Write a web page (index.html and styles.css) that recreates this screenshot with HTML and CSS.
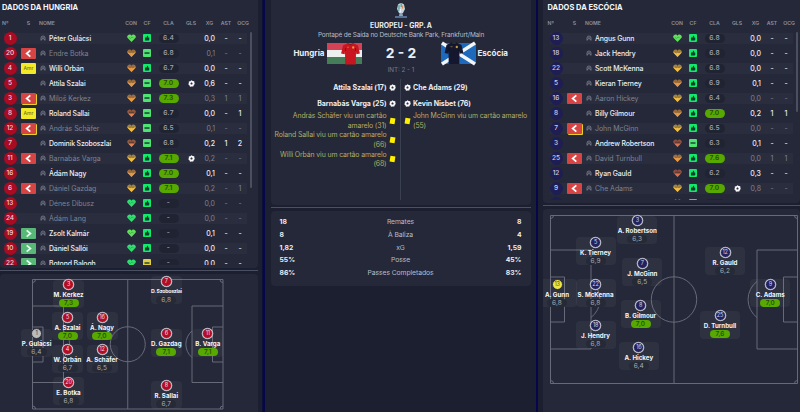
FILE: index.html
```html
<!DOCTYPE html>
<html lang="pt">
<head>
<meta charset="utf-8">
<title>Hungria - Escócia</title>
<link rel="stylesheet" href="styles.css">
</head>
<body>
<svg class="defs" width="0" height="0">
  <defs>
    <path id="heartShape" d="M9 16 1.8 8.7A4.2 4.2 0 0 1 2 2.6a4.400 4.400 0 0 1 7 .7 4.400 4.400 0 0 1 7-.7 4.200 4.200 0 0 1 .2 6.100z"/>
    <clipPath id="clipHalf"><rect y="7" width="18" height="12"/></clipPath>
    <clipPath id="clipLow"><rect y="9.5" width="18" height="9"/></clipPath>
    <symbol id="heart-full" viewBox="0 0 18 17"><use href="#heartShape" fill="currentColor"/><path d="M4 6.5l3 2.5 3-3 3 1.5" stroke="#2a9a50" stroke-width="1.3" fill="none"/></symbol>
    <symbol id="heart-half" viewBox="0 0 18 17"><use href="#heartShape" fill="currentColor" opacity=".6"/><use href="#heartShape" fill="currentColor" clip-path="url(#clipHalf)"/><path d="M4 6l2.500 1.500L9 6l2.500 1.500L14 6" stroke="#6d5330" stroke-width="1.200" fill="none"/></symbol>
    <symbol id="heart-low" viewBox="0 0 18 17"><use href="#heartShape" fill="currentColor" opacity=".55"/><use href="#heartShape" fill="currentColor" clip-path="url(#clipLow)"/><path d="M4 6.500h10" stroke="#53352f" stroke-width="2" fill="none"/></symbol>
    <symbol id="thumb" viewBox="0 0 16 16"><rect width="16" height="16" rx="2" fill="#12ea6c"/><path d="M4 7h3l1.500-3.500 1.800.5L10 7h2.500v4.500L11.500 13H4z" fill="#0d3f2c"/></symbol>
    <symbol id="minus" viewBox="0 0 16 16"><rect width="16" height="16" rx="2" fill="currentColor"/><path d="M3 6.500h10v3.200H3z" fill="#1d4a36"/></symbol>
    <symbol id="person" viewBox="0 0 12 12"><path d="M2 11V6a4 4 0 0 1 8 0v5M4.500 4.500v2a1.500 1.500 0 0 0 3 0v-2M2 10l2.500-1.500M10 10 7.500 8.500" fill="none" stroke="#8a8e9d" stroke-width="1.400"/></symbol>
    <symbol id="ball" viewBox="0 0 14 14"><path d="M7 .5 9.500 2l3 .5.3 3L13.500 8l-1.800 2.200L10.500 13 7 12.800 4 13.500 2.800 10.600.5 8.500 1.800 6 1.500 3l3-.7z" fill="#f8f9fb"/><path d="M7 4.600 9.300 6.300 8.400 9H5.600L4.700 6.300z" fill="#2a2e3d"/></symbol>
    <symbol id="out" viewBox="0 0 16 12"><path d="M10 2.500 6 6 10 9.500" fill="none" stroke="#fff" stroke-width="1.900"/></symbol>
    <symbol id="in" viewBox="0 0 16 12"><path d="M6 2.500 10.200 6 6 9.500" fill="none" stroke="#e8fff0" stroke-width="1.800"/></symbol>
    <symbol id="shirt" viewBox="0 0 20 23"><path d="M7 1.200 2.500 3.500.6 11.500l3.600.8.300-2.500L4.700 22.500h10.600l.2-12.700.3 2.500 3.600-.8-1.900-8L13 1.200Q10 3 7 1.200z" fill="currentColor"/><path d="M7 1.200Q10 4 13 1.200M5 9V6M15 9V6" fill="none" stroke="#000" stroke-opacity=".3"/><path d="M6.500 5.200h2M12 4.700h1.500v1.500H12z" stroke="#e0b840" stroke-width=".5" fill="#d8b040"/></symbol>
  </defs>
</svg>
<main class="layout">
  <section class="side home" id="home"></section>
  <section class="center">
    <div class="card match">
      <svg class="trophy" viewBox="0 0 12 16"><path d="M3 1.500Q6-.8 9 1.500L10 6 8 10H4L2 6z" fill="#c6d5dc"/><path d="M4 2v6M6.200 1v3" stroke="#4e9c98" stroke-width="1.200"/><path d="M7.500 2.500v3" stroke="#d4894f" stroke-width="1.200"/><path d="M5.300 6v3.500" stroke="#eef" stroke-width="1.300"/><path d="M4.500 10h3l.5 3H4z" fill="#8fa4b8"/><path d="M0 13.200h12v1.600H0z" fill="#5d86ac"/></svg>
      <h1>EUROPEU - GRP. A</h1>
      <p class="venue">Pontapé de Saída no Deutsche Bank Park, Frankfurt/Main</p>
      <div class="scoreline">
        <span class="team left">Hungria</span>
        <svg class="flag" viewBox="0 0 35 21"><rect width="35" height="7" fill="#d34355"/><rect y="7" width="35" height="7" fill="#edf0ee"/><rect y="14" width="35" height="7" fill="#457d59"/><use href="#shirt" x="13.500" y="-1" width="20" height="23" color="#c9151f"/></svg>
        <strong class="score">2 - 2</strong>
        <svg class="flag" viewBox="0 0 35 21"><rect width="35" height="21" fill="#1d69bb"/><path d="M1 0 34 21M34 0 1 21" stroke="#f2f6fa" stroke-width="3.300"/><use href="#shirt" x="3" y="-1.500" width="20" height="23" color="#14172e"/></svg>
        <span class="team">Escócia</span>
      </div>
      <p class="half">INT: 2 - 1</p>
      <div class="events">
        <ul class="ev home-ev">
          <li class="goal"><span>Attila Szalai (17)</span><svg><use href="#ball"/></svg></li>
          <li class="goal"><span>Barnabás Varga (25)</span><svg><use href="#ball"/></svg></li>
          <li class="booking"><span>András Schäfer viu um cartão<br>amarelo (31)</span><i></i></li>
          <li class="booking"><span>Roland Sallai viu um cartão amarelo<br>(66)</span><i></i></li>
          <li class="booking"><span>Willi Orbán viu um cartão amarelo<br>(68)</span><i></i></li>
        </ul>
        <ul class="ev away-ev">
          <li class="goal"><svg><use href="#ball"/></svg><span>Che Adams (29)</span></li>
          <li class="goal"><svg><use href="#ball"/></svg><span>Kevin Nisbet (76)</span></li>
          <li class="booking"><i></i><span>John McGinn viu um cartão amarelo<br>(55)</span></li>
        </ul>
      </div>
    </div>
    <div class="rule"></div>
    <div class="card stats">
      <div><b>18</b><span>Remates</span><b>8</b></div>
      <div><b>8</b><span>À Baliza</span><b>4</b></div>
      <div><b>1,82</b><span>xG</span><b>1,59</b></div>
      <div><b>55%</b><span>Posse</span><b>45%</b></div>
      <div><b>86%</b><span>Passes Completados</span><b>83%</b></div>
    </div>
  </section>
  <section class="side away" id="away"></section>
</main>
<script src="app.js"></script>
</body>
</html>
```
FILE: styles.css
```css
* { box-sizing: border-box; }
body { margin: 0; width: 800px; height: 412px; overflow: hidden; background: #1b1f30; color: #eceef3; font-family: Inter, "Liberation Sans", sans-serif; font-size: 7px; }
.defs { position: absolute; }
h1, h2, p, ul { margin: 0; padding: 0; list-style: none; font-weight: inherit; }
svg { display: block; }
.layout { display: grid; grid-template-columns: 265px 271px 264px; height: 412px; }
.card { background: #242838; }
.rule { height: 1px; background: #4a4f61; }

.side { display: flex; flex-direction: column; min-width: 0; }
.home { border-right: 2px solid #05064c; box-shadow: inset -1px 0 #0c0f3a; padding-right: 5px; }
.away { border-left: 2px solid #05064c; padding-left: 5px; }
.roster { position: relative; border-radius: 0 0 4px 4px; overflow: hidden; flex: none; margin-bottom: 2px; }
.home .roster { height: 268px; }
.away .roster { height: 203px; padding-left: 3px; }
.side .rule { margin-bottom: 3px; }
.roster h2 { height: 15px; line-height: 15px; padding-left: 2px; font-size: 7.5px; font-weight: 700; color: #f6f7fa; white-space: nowrap; }
.head, .row { display: grid; align-items: center; justify-items: center; white-space: nowrap; }
.head { grid-template-columns: 20px 17px 2px 84px 16px 16px 27px 18px 19px 14px 20px; height: 15.5px; font-size: 5.2px; font-weight: 600; color: #8d91a0; }
.head :first-child { justify-self: start; padding-left: 2px; }
.head .nome { justify-self: start; }
.away .head :first-child, .away h2 { padding-left: 1.5px; }
.rows { overflow: hidden; }
.home .rows { height: 234px; }
.away .rows { height: 169.5px; }
.row { grid-template-columns: 20px 17px 12px 74px 16px 16px 27px 18px 15px 22px 6px; height: 15px; width: 247px; color: #eceef3; font-weight: 500; }
.row:nth-child(odd) { background: linear-gradient(#292d3e, #292d3e) 4px 2px / 243px 11px no-repeat; }
.row.off { color: #7f8392; font-weight: 400; }
.num { width: 13px; height: 13px; border-radius: 50%; background: #a80b22; color: #f0d4d9; font-size: 6.500px; font-weight: 500; line-height: 13px; text-align: center; }
.away .num { background: #1f1e54; color: #cfd0e4; }
.sub { width: 15px; height: 11px; border-radius: 1px; }
.sub svg { width: 15px; height: 11px; }
.sub.out, .sub.outy { background: #d64444; }
.sub.outy { box-shadow: 1px 1px #e5cf2a; }
.sub.in { background: #57b877; }
.sub.amr { background: #f2ea27; color: #77741f; font-size: 5px; line-height: 11px; text-align: center; }
.person { width: 6px; height: 6px; }
.name { justify-self: start; font-size: 6.9px; letter-spacing: -.12px; }
.off .name { font-size: 7px; letter-spacing: -.05px; }
.heart { width: 9px; height: 8.5px; }
.cf { width: 8px; height: 8px; }
.cla { width: 20px; height: 9px; border-radius: 4.5px; background: #202432; color: #a4a7b2; font-size: 6.7px; line-height: 9px; text-align: center; font-weight: 500; letter-spacing: .2px; }
.cla.hi { background: #57a800; color: #234d05; font-weight: 600; }
.ball { width: 7px; height: 7px; }
.xg { justify-self: end; }
.scroll { position: absolute; right: 6px; top: 32px; width: 2px; height: 156px; border-radius: 1px; background: #4b4f5f; }
.away .scroll { right: 2px; height: 80px; }

.pitch { position: relative; flex: 1; border-radius: 4px 4px 0 0; overflow: hidden; }
.pitch > svg { width: 100%; height: 100%; fill: none; stroke: #6d7180; stroke-width: .9; }
.player { position: absolute; left: var(--x); top: var(--y); width: 31px; height: 28px; margin: -5px 0 0 -15.5px; border-radius: 4px; background: rgba(255,255,255,.045); display: flex; flex-direction: column; align-items: center; white-space: nowrap; }
.away .player { width: 40px; margin-left: -20px; }
.player .dot { width: 11px; height: 11px; margin-top: -.5px; border-radius: 50%; border: 1.4px solid #bfc0cb; border-width: 1px; box-shadow: 0 0 0 .3px #bfc0cb; background: #b30d25; color: #f3dce0; font-size: 5.500px; line-height: 9px; text-align: center; letter-spacing: -.2px; flex: none; }
.away .dot { background: #22225f; color: #d6d7e6; }
.player.gk .dot { background: #b9bbbd; color: #33363f; border-color: #2b2e39; box-shadow: none; }
.away .player.gk .dot { background: #efe544; color: #55521c; }
.player .pn { height: 9px; line-height: 9px; font-size: 6.2px; font-weight: 700; color: #f4f5f8; }
.player .pn.narrow { font-size: 5.2px; font-weight: 700; letter-spacing: -.25px; }
.player .pr { width: 20px; height: 8px; border-radius: 4px; background: #262a36; color: #a9acb5; font-size: 6.500px; line-height: 8px; text-align: center; letter-spacing: .15px; }
.player .pr.hi { background: #57a800; color: #204806; font-weight: 500; }

.center { padding: 0 5px 0 6px; }
.match { height: 205px; border-radius: 0 0 4px 4px; display: flex; flex-direction: column; align-items: center; padding-top: 3px; margin-bottom: 2px; }
.trophy { width: 12px; height: 16px; }
.match h1 { font-size: 6.9px; font-weight: 700; line-height: 9px; margin-top: 1.500px; }
.venue { font-size: 6.500px; letter-spacing: -.19px; line-height: 9px; margin-top: 1px; color: #b9bcc7; }
.scoreline { display: grid; grid-template-columns: 53px 2px 35px 79px 35px 2px 53px; align-items: center; height: 26px; margin-top: .5px; }
.team { font-size: 8px; font-weight: 700; grid-column: 7; }
.team.left { grid-column: 1; text-align: right; }
.flag { grid-column: 3; width: 35px; height: 21px; overflow: visible; }
.score { grid-column: 4; font-size: 13.8px; text-align: center; }
.score + .flag { grid-column: 5; }
.half { font-size: 6.300px; line-height: 9px; color: #777b8a; margin-bottom: 4px; }
.events { width: 100%; height: 121px; display: grid; grid-template-columns: 130px 1fr; }
.home-ev { border-right: 1px solid #3b4050; padding-right: 4.500px; }
.away-ev { padding-left: 3px; }
.ev li { display: flex; gap: 2px; align-items: center; white-space: nowrap; }
.home-ev li { justify-content: flex-end; text-align: right; }
.goal { height: 16px; font-size: 7px; font-weight: 700; letter-spacing: -.04px; }
.goal svg { width: 7px; height: 7px; flex: none; }
.booking { height: 19.3px; line-height: 9.65px; font-size: 6.9px; letter-spacing: -.11px; color: #b5ac65; }
.booking i { flex: none; width: 5px; height: 6px; margin: 0 1px; background: #fff000; transform: rotate(9deg); }
.center .rule { margin-bottom: 3px; }
.stats { height: 75px; border-radius: 4px; padding: 4px 9.5px 0 8.5px; }
.stats div { height: 12.85px; display: grid; grid-template-columns: 30px 1fr 30px; align-items: center; text-align: center; color: #b9bcc7; }
.stats span { font-size: 6.8px; letter-spacing: -.08px; }
.stats b { color: #eceef3; text-align: left; font-size: 6.8px; }
.stats b:last-child { text-align: right; }
```
FILE: app.js
```js
// number, sub status, name, inactive, heart, colour, confidence, rating, goal, xG, assists, key chances
const G = '#2fe070', L = '#62e05c', Y = '#f1bc43', O = '#e79a45', R = '#e0704a';
const home = {
  id: 'home', title: 'DADOS DA HUNGRIA',
  rows: [
    [1, '', 'Péter Gulácsi', 0, 'full', L, 't', '6.4', 0, '0,0', '-', '-'],
    [20, 'out', 'Endre Botka', 1, 'half', O, 'm', '6.8', 0, '0,1', '-', '-'],
    [4, 'amr', 'Willi Orbán', 0, 'half', O, 't', '6.7', 0, '0,0', '-', '-'],
    [5, '', 'Attila Szalai', 0, 'half', O, 'm', '7.0', 1, '0,6', '-', '-'],
    [3, 'outy', 'Miloš Kerkez', 1, 'half', O, 'm', '7.3', 0, '0,3', '1', '1'],
    [8, 'amr', 'Roland Sallai', 0, 'low', '#e88348', 'm', '6.7', 0, '0,0', '-', '1'],
    [12, 'outy', 'András Schäfer', 1, 'half', Y, 'm', '6.5', 0, '0,1', '-', '-'],
    [7, '', 'Dominik Szoboszlai', 0, 'low', '#e88348', 'm', '6.8', 0, '0,2', '1', '2'],
    [11, 'out', 'Barnabás Varga', 1, 'half', Y, 't', '7.1', 1, '0,2', '-', '-'],
    [16, '', 'Ádám Nagy', 0, 'half', O, 't', '7.0', 0, '0,1', '-', '-'],
    [6, 'out', 'Dániel Gazdag', 1, 'half', Y, 't', '7.1', 0, '0,2', '-', '1'],
    [13, '', 'Dénes Dibusz', 1, 'full', G, 't', '-', 0, '0,0', '-', '-'],
    [24, '', 'Ádám Lang', 1, 'full', G, 't', '-', 0, '0,0', '-', '-'],
    [19, 'in', 'Zsolt Kalmár', 0, 'full', L, 't', '-', 0, '0,1', '-', '-'],
    [10, 'in', 'Dániel Sallói', 0, 'full', G, 't', '-', 0, '0,0', '-', '-'],
    [22, 'in', 'Botond Balogh', 0, 'full', G, 'y', '-', 0, '0,0', '-', '-']
  ],
  origin: [0, 274], size: [258, 138],
  field: { l: 32.5, r: 223, t: 279.5, b: 409, pw: 31, pt: 306, pb: 382.5, gw: 10.5, gt: 327, gb: 362, c: 17.5, arc: 7 },
  players: [
    [1, 'P. Gulácsi', '6,4', 36.5, 333.5, 1], [3, 'M. Kerkez', '7,3', 68.5, 284.7], [5, 'A. Szalai', '7,0', 67.5, 317.2],
    [4, 'W. Orbán', '6,7', 67.5, 349.8], [20, 'E. Botka', '6,8', 68.5, 382.3], [16, 'Á. Nagy', '7,0', 102, 317.2],
    [12, 'A. Schäfer', '6,5', 102, 349.8], [7, 'D. Szoboszlai', '6,8', 166.3, 281.3], [6, 'D. Gazdag', '7,1', 166.3, 333.5],
    [8, 'R. Sallai', '6,7', 166.3, 385.7], [11, 'B. Varga', '7,1', 207.8, 333.5]
  ]
};
const away = {
  id: 'away', title: 'DADOS DA ESCÓCIA',
  rows: [
    [13, '', 'Angus Gunn', 0, 'full', L, 't', '6.8', 0, '0,0', '-', '-'],
    [18, '', 'Jack Hendry', 0, 'half', Y, 't', '6.8', 0, '0,0', '-', '-'],
    [22, '', 'Scott McKenna', 0, 'half', Y, 't', '6.8', 0, '0,0', '-', '-'],
    [5, '', 'Kieran Tierney', 0, 'half', O, 't', '6.9', 0, '0,1', '-', '-'],
    [16, 'out', 'Aaron Hickey', 1, 'half', Y, 't', '6.4', 0, '0,0', '-', '-'],
    [8, '', 'Billy Gilmour', 0, 'half', O, 't', '7.0', 0, '0,2', '1', '1'],
    [7, 'outy', 'John McGinn', 1, 'half', Y, 't', '6.5', 0, '0,0', '-', '-'],
    [3, '', 'Andrew Robertson', 0, 'low', R, 'm', '6.3', 0, '0,1', '-', '-'],
    [25, 'out', 'David Turnbull', 1, 'half', O, 't', '7.6', 0, '0,0', '1', '1'],
    [12, '', 'Ryan Gauld', 0, 'low', R, 't', '6.2', 0, '0,3', '-', '-'],
    [9, 'out', 'Che Adams', 1, 'half', Y, 't', '7.0', 1, '0,8', '-', '-'],
    ['', '', '', 1, 'full', G, 't', '', 0, '', '', '']
  ],
  origin: [543, 209], size: [257, 203],
  field: { l: 550.5, r: 797.5, t: 215.5, b: 383.5, pw: 40.5, pt: 250, pb: 349, gw: 14, gt: 277, gb: 322, c: 22.7, arc: 9.5 },
  players: [
    [13, 'A. Gunn', '6,8', 557, 284, 1], [5, 'K. Tierney', '6,9', 595.5, 242], [22, 'S. McKenna', '6,8', 595.5, 284],
    [18, 'J. Hendry', '6,8', 595.5, 325.7], [3, 'A. Robertson', '6,3', 637.3, 220.5], [7, 'J. McGinn', '6,5', 642.3, 263],
    [8, 'B. Gilmour', '7,0', 640.5, 305], [16, 'A. Hickey', '6,4', 638.8, 347.3], [12, 'R. Gauld', '6,2', 725, 252.3],
    [25, 'D. Turnbull', '7,6', 720, 315.6], [9, 'C. Adams', '7,0', 770.3, 284]
  ]
};
const icon = (id, cls, color) => `<svg class="${cls}"${color ? ` color="${color}"` : ''}><use href="#${id}"/></svg>`;
const sub = s => !s ? '<span></span>' : s === 'amr' ? '<span class="sub amr">Amr</span>'
  : `<span class="sub ${s}"><svg><use href="#${s === 'in' ? 'in' : 'out'}"/></svg></span>`;
const row = ([n, s, name, off, h, c, cf, cla, gls, xg, ast, ocg]) => `<div class="row${off ? ' off' : ''}">
  <span class="num">${n}</span>${sub(s)}${icon('person', 'person')}<span class="name">${name}</span>
  ${icon('heart-' + h, 'heart', c)}${cf === 't' ? icon('thumb', 'cf') : icon('minus', 'cf', cf === 'y' ? '#e3cd45' : '#4fe374')}
  <span class="cla${parseFloat(cla) >= 7 ? ' hi' : ''}">${cla}</span>${gls ? icon('ball', 'ball') : '<span></span>'}
  <span class="xg">${xg}</span><span>${ast}</span><span>${ocg}</span></div>`;
const lines = (f, o, s) => {
  const cx = (f.l + f.r) / 2, cy = (f.t + f.b) / 2, k = f.arc * 1.9;
  return `<svg viewBox="${o[0]} ${o[1]} ${s[0]} ${s[1]}"><path d="M${f.l} ${f.t}H${f.r}V${f.b}H${f.l}zM${cx} ${f.t}V${f.b}
  M${f.l} ${f.pt}h${f.pw}V${f.pb}h${-f.pw}M${f.r} ${f.pt}h${-f.pw}V${f.pb}h${f.pw}
  M${f.l} ${f.gt}h${f.gw}V${f.gb}h${-f.gw}M${f.r} ${f.gt}h${-f.gw}V${f.gb}h${f.gw}
  M${f.l + f.pw} ${cy - k}a${f.c} ${f.c} 0 0 1 0 ${2 * k}M${f.r - f.pw} ${cy - k}a${f.c} ${f.c} 0 0 0 0 ${2 * k}
  M${f.l + 3} ${f.t}a3 3 0 0 1-3 3M${f.r - 3} ${f.t}a3 3 0 0 0 3 3M${f.l} ${f.b - 3}a3 3 0 0 1 3 3M${f.r} ${f.b - 3}a3 3 0 0 0-3 3"/>
  <circle cx="${cx}" cy="${cy}" r="${f.c}"/></svg>`;
};
for (const t of [home, away]) {
  const heads = ['Nº', 'S', '', 'NOME', 'CON', 'CF', 'CLA', 'GLS', 'XG', 'AST', 'OCG'];
  document.getElementById(t.id).innerHTML = `<div class="card roster"><h2>${t.title}</h2>
  <div class="head">${heads.map(h => `<span${h === 'NOME' ? ' class="nome"' : ''}>${h}</span>`).join('')}</div>
  <div class="rows">${t.rows.map(row).join('')}</div><i class="scroll"></i></div><div class="rule"></div>
  <div class="card pitch">${lines(t.field, t.origin, t.size)}${t.players.map(([n, name, r, x, y, gk]) =>
    `<div class="player${gk ? ' gk' : ''}" style="--x:${x - t.origin[0]}px;--y:${y - t.origin[1]}px"><span class="dot">${n}</span>
    <span class="pn${name.length > 12 ? ' narrow' : ''}">${name}</span><span class="pr${parseFloat(r) >= 7 ? ' hi' : ''}">${r}</span></div>`).join('')}</div>`;
}
```
